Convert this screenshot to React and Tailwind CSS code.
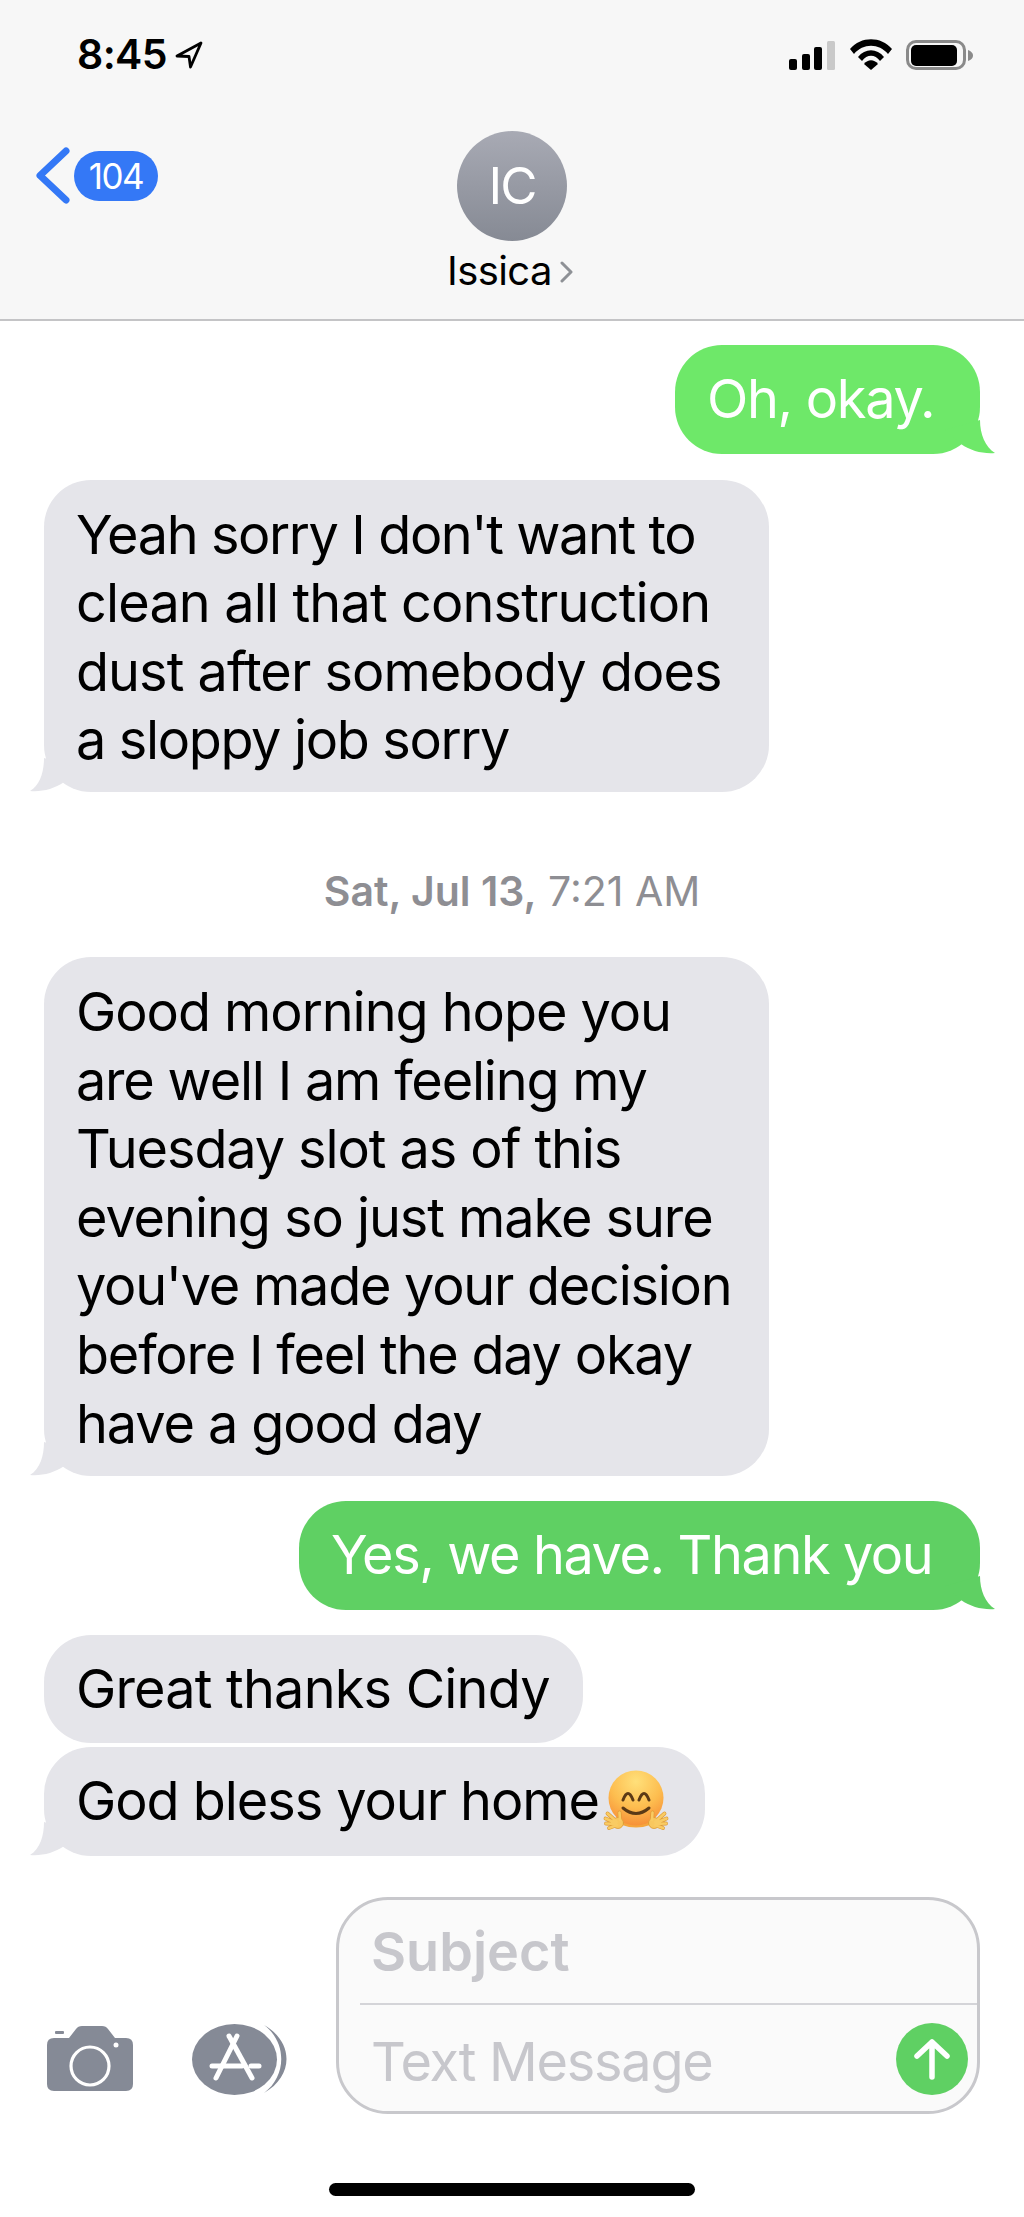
const font = { fontFamily: "Inter, 'Liberation Sans', sans-serif" };

function Tail({ side, color }) {
  if (side === "left") {
    return (
      <svg className="absolute left-[-14px] bottom-0" width="50" height="34" viewBox="0 0 50 34">
        <path d="M14 0 C14 14 10 27 0 33 C12 34 24 31 34 24 L50 10 Z" fill={color} />
      </svg>
    );
  }
  return (
    <svg className="absolute right-[-15px] bottom-0" width="50" height="34" viewBox="0 0 50 34">
      <path d="M35 0 C35 14 40 27 50 33 C38 34 26 31 16 24 L0 10 Z" fill={color} />
    </svg>
  );
}

function Incoming({ lines, tail, className }) {
  return (
    <div className={`relative self-start bg-[#e5e5ea] text-black rounded-[47px] pl-[32px] text-[54px] leading-[68.6px] whitespace-nowrap ${className}`}>
      {lines.map(([text, tracking]) => (
        <div key={text} className={tracking}>{text}</div>
      ))}
      {tail && <Tail side="left" color="#e5e5ea" />}
    </div>
  );
}

function Outgoing({ text, color, className }) {
  return (
    <div className={`relative self-end text-white rounded-[47px] pl-[32px] py-[20px] text-[54px] leading-[68.6px] whitespace-nowrap ${className}`} style={{ backgroundColor: color }}>
      {text}
      <Tail side="right" color={color} />
    </div>
  );
}

function Hand() {
  const fingers = "M22 62 L12.5 53.5 M21 63 L10.5 58.5 M21 64 L11 63.5 M22 65 L14 68 M25 60 L24.5 52.5";
  return (
    <g strokeLinecap="round" fill="none">
      <path d={fingers} stroke="#dd9a35" strokeWidth="3.8" />
      <circle cx="23" cy="63" r="5.5" fill="#f8c75e" stroke="#dd9a35" strokeWidth="0.8" />
      <path d={fingers} stroke="#f9cb63" strokeWidth="2.6" />
    </g>
  );
}

function HugEmoji() {
  return (
    <svg className="absolute left-[551px] top-[13px]" width="85" height="80" viewBox="0 0 85 80">
      <defs>
        <radialGradient id="hf" cx="50%" cy="20%" r="85%">
          <stop offset="0%" stopColor="#ffe07a" />
          <stop offset="55%" stopColor="#fdbd4f" />
          <stop offset="100%" stopColor="#f68a35" />
        </radialGradient>
      </defs>
      <path d="M27 54 H55 L55 65 Q41 70 27 65 Z" fill="#f5a53c" />
      <circle cx="41" cy="38" r="27.5" fill="url(#hf)" />
      <path d="M28 40 Q33 27 38 40" fill="none" stroke="#5b3a16" strokeWidth="3" strokeLinecap="round" />
      <path d="M44 40 Q49 27 54 40" fill="none" stroke="#5b3a16" strokeWidth="3" strokeLinecap="round" />
      <path d="M28 48 Q41 59 54 48" fill="none" stroke="#5b3a16" strokeWidth="3" strokeLinecap="round" />
      <Hand />
      <g transform="translate(82 0) scale(-1 1)">
        <Hand />
      </g>
    </svg>
  );
}

function StatusIcons() {
  return (
    <div className="flex items-start">
      <svg width="47" height="30" viewBox="0 0 47 30">
        <rect x="0" y="19" width="8" height="11" rx="2" fill="#000" />
        <rect x="13" y="14" width="8" height="16" rx="2" fill="#000" />
        <rect x="25" y="7" width="8" height="23" rx="2" fill="#000" />
        <rect x="38" y="1" width="8" height="29" rx="1.5" fill="#c9c9c9" />
      </svg>
      <svg className="ml-[14px] mt-[-1px]" width="42" height="31" viewBox="0 0 42 31">
        <path d="M0 10 C11 -3 31 -3 42 10 L38 15 C29 4 13 4 4 15 Z" fill="#000" />
        <path d="M8 18 C15 9 27 9 34 18 L30 22 C25 15 17 15 12 22 Z" fill="#000" />
        <path d="M14 25 C18 20 24 20 28 25 L21 31 Z" fill="#000" />
      </svg>
      <div className="ml-[14px] flex items-center">
        <div className="w-[60px] h-[30px] rounded-[10px] border-[3px] border-[#8a8a8a] pl-[2px] pt-[2px]">
          <div className="w-[46px] h-[21px] rounded-[5px] bg-black" />
        </div>
        <svg className="ml-[2px]" width="5" height="11" viewBox="0 0 5 11">
          <path d="M0 0 Q5 2 5 5.5 Q5 9 0 11 Z" fill="#8a8a8a" />
        </svg>
      </div>
    </div>
  );
}

export default function App() {
  return (
    <div className="w-[1024px] h-[2217px] bg-white flex flex-col overflow-hidden" style={font}>
      <header className="h-[321px] bg-[#f7f7f7] border-b-2 border-[#c4c4c6] relative shrink-0 flex flex-col">
        <div className="flex justify-between items-start pt-[31px] pl-[77px] pr-[51px]">
          <div className="flex items-center">
            <span className="text-[41px] leading-[47px] font-semibold text-black tracking-[-0.6px]">8:45</span>
            <svg className="ml-[8px]" width="28" height="28" viewBox="0 0 28 28">
              <path d="M26 2 L2 15 L14 15.5 L15.5 26 Z" fill="none" stroke="#000" strokeWidth="2.8" strokeLinejoin="round" />
            </svg>
          </div>
          <div className="pt-[9px]"><StatusIcons /></div>
        </div>
        <div className="absolute left-[35px] top-[147px] flex items-center">
          <svg width="36" height="57" viewBox="0 0 36 57">
            <path d="M31 4 L5 28.5 L31 53" fill="none" stroke="#3478f6" strokeWidth="7" strokeLinecap="round" strokeLinejoin="round" />
          </svg>
          <div className="ml-[3px] w-[84px] h-[50px] rounded-full bg-[#3478f6] text-white text-[35px] leading-[50px] text-center tracking-[-1.5px]">104</div>
        </div>
        <div className="mt-[53px] flex flex-col items-center">
          <div className="w-[110px] h-[110px] rounded-full bg-gradient-to-b from-[#a8aab4] to-[#868a94] text-white text-[51px] leading-[110px] text-center tracking-[-2px]">IC</div>
          <div className="mt-[8px] pr-[4px] flex items-center text-[40px] leading-[44px] text-black tracking-[-0.6px]">
            Issica
            <svg className="ml-[8px] mt-[2px]" width="13" height="22" viewBox="0 0 13 22">
              <path d="M2 2 L11 11 L2 20" fill="none" stroke="#8e9196" strokeWidth="3" strokeLinecap="round" strokeLinejoin="round" />
            </svg>
          </div>
        </div>
      </header>

      <main className="flex flex-col px-[44px] pt-[24px] shrink-0">
        <Outgoing text="Oh, okay." color="#6ee869" className="w-[305px] tracking-[-1.3px]" />
        <Incoming
          className="mt-[26px] w-[725px] pt-[21px] pb-[17px]"
          tail
          lines={[
            ["Yeah sorry I don't want to", "tracking-[-1.4px]"],
            ["clean all that construction", "tracking-[-0.85px]"],
            ["dust after somebody does", "tracking-[-0.95px]"],
            ["a sloppy job sorry", "tracking-[-1.35px]"],
          ]}
        />
        <div className="mt-[77px] text-[41px] leading-[44px] text-[#8e8e93] text-center">
          <span className="font-semibold">Sat, Jul 13,</span> 7:21 AM
        </div>
        <Incoming
          className="mt-[44px] w-[725px] pt-[21px] pb-[18px]"
          tail
          lines={[
            ["Good morning hope you", "tracking-[-1.05px]"],
            ["are well I am feeling my", "tracking-[-1.2px]"],
            ["Tuesday slot as of this", "tracking-[-1.1px]"],
            ["evening so just make sure", "tracking-[-1.05px]"],
            ["you've made your decision", "tracking-[-1.25px]"],
            ["before I feel the day okay", "tracking-[-1.2px]"],
            ["have a good day", "tracking-[-1.1px]"],
          ]}
        />
        <Outgoing text="Yes, we have. Thank you" color="#5fd063" className="mt-[25px] w-[681px] tracking-[-1.4px]" />
        <Incoming className="mt-[25px] w-[539px] py-[20px]" lines={[["Great thanks Cindy", "tracking-[-0.8px]"]]} />
        <div className="relative self-start mt-[4px]">
          <Incoming className="w-[661px] py-[20px]" tail lines={[["God bless your home", "tracking-[-1.05px]"]]} />
          <HugEmoji />
        </div>
      </main>

      <div className="flex items-end pl-[47px] pr-[44px] mt-[41px] shrink-0">
        <svg className="mb-[23px]" width="86" height="65" viewBox="0 0 86 65">
          <path d="M7 12 H22 L29 3 Q31 0 35 0 H55 Q59 0 61 3 L68 12 H79 Q86 12 86 19 V58 Q86 65 79 65 H7 Q0 65 0 58 V19 Q0 12 7 12 Z" fill="#858a96" />
          <rect x="8" y="5" width="9" height="3" rx="1" fill="#858a96" />
          <circle cx="43" cy="40" r="19" fill="none" stroke="#fff" strokeWidth="3.2" />
          <circle cx="69" cy="19" r="2.5" fill="#fff" />
        </svg>
        <svg className="ml-[59px] mb-[19px]" width="96" height="71" viewBox="0 0 96 71">
          <ellipse cx="42.5" cy="35.5" rx="42.5" ry="35.5" fill="#858a96" />
          <path d="M72 1 C102 18 102 52 72 69 C95 52 95 18 72 1 Z" fill="#858a96" />
          <g stroke="#fff" strokeWidth="5" strokeLinecap="round" fill="none">
            <path d="M45 12 L24 54" />
            <path d="M37 12 L60 54" />
            <path d="M20 42 H50" />
            <path d="M59 42 H67" />
          </g>
        </svg>
        <div className="ml-[48px] w-[644px] h-[217px] shrink-0 border-[3px] border-[#c8c8cc] bg-[#fafafa] rounded-[52px] flex flex-col">
          <div className="h-[103px] pl-[32px] pt-[22px] text-[54px] leading-[60px] font-semibold text-[#c7c7cc]">Subject</div>
          <div className="ml-[21px] h-[2px] bg-[#d4d4d8]" />
          <div className="flex-1 flex items-start justify-between pl-[32px] pr-[9px]">
            <div className="pt-[27px] text-[54px] leading-[60px] text-[#c7c7cc] tracking-[-1.25px]">Text Message</div>
            <svg className="mt-[18px]" width="72" height="72" viewBox="0 0 72 72">
              <circle cx="36" cy="36" r="36" fill="#5fd063" />
              <path d="M36 54 V19 M21 33 L36 19 L51 33" fill="none" stroke="#fff" strokeWidth="5.5" strokeLinecap="round" strokeLinejoin="round" />
            </svg>
          </div>
        </div>
      </div>

      <div className="mt-[69px] mx-auto w-[366px] h-[13px] rounded-full bg-black shrink-0" />
    </div>
  );
}
